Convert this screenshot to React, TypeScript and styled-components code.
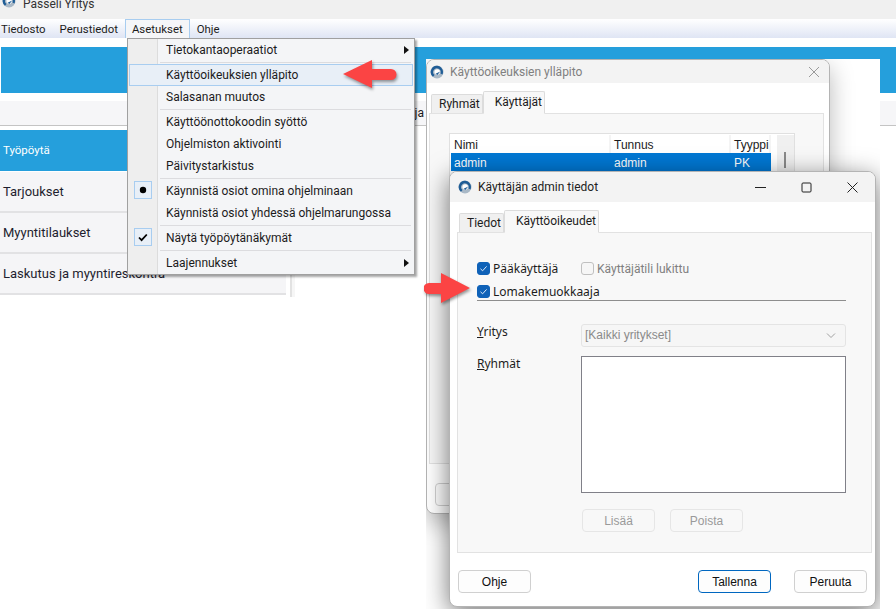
import React from 'react';
import styled, { createGlobalStyle } from 'styled-components';

const GlobalStyle = createGlobalStyle`
  html, body {
    margin: 0;
    padding: 0;
    background: #ffffff;
  }
  body {
    font-family: Roboto, "Noto Sans", sans-serif;
    font-size: 12px;
    color: #1a1a1a;
    overflow: hidden;
  }
`;

const Page = styled.div`
  position: relative;
  width: 896px;
  height: 609px;
  overflow: hidden;
  background: #ffffff;
`;

const TitleBar = styled.div`
  height: 19px;
  background: #f0f0f0;
  display: flex;
  align-items: flex-start;
  gap: 7px;
  padding-left: 2px;
  overflow: hidden;
  svg {
    margin-top: -6px;
  }
  span {
    font-size: 12px;
    line-height: 16px;
    color: #333;
    margin-top: -4px;
  }
`;

const MenuBar = styled.div`
  height: 19px;
  display: flex;
  background: linear-gradient(#ffffff, #dfe5f4);
`;

const MenuItem = styled.div<{ $open?: boolean }>`
  padding: 0 6px;
  font-size: 11.4px;
  line-height: 18px;
  color: #1c1c1c;
  border: 1px solid ${p => (p.$open ? '#a8cdf0' : 'transparent')};
  border-bottom: 0;
  background: ${p => (p.$open ? '#f5f6f8' : 'transparent')};
  &:first-child {
    padding-left: 0;
  }
`;

const Banner = styled.div`
  margin: 9px 0 0 1px;
  height: 46px;
  background: #259fdc;
`;

const ToolRow = styled.div`
  margin-top: 8px;
  height: 24px;
  background: #f6f6f8;
  border-bottom: 1px solid #c4c4c4;
  display: flex;
  justify-content: flex-end;
  padding-right: 472px;
  font-size: 12px;
  line-height: 25px;
`;

const Sidebar = styled.div`
  width: 286px;
  margin-top: 4px;
  padding: 0 4px 2px 0;
  border-right: 2px solid #e2e2e2;
  box-shadow: 3px 0 0 #f6f6f6;
  display: flex;
  flex-direction: column;
`;

const SideItem = styled.div<{ $active?: boolean }>`
  box-sizing: border-box;
  height: 41px;
  padding-left: 3px;
  margin-bottom: ${p => (p.$active ? '1px' : '0')};
  font-size: ${p => (p.$active ? '11.5px' : '13px')};
  line-height: ${p => (p.$active ? '41px' : '39px')};
  color: ${p => (p.$active ? '#ffffff' : '#1e1e2e')};
  background: ${p => (p.$active ? '#259fdc' : '#f5f5f7')};
  border-bottom: ${p => (p.$active ? '0' : '2px solid #e2e2e4')};
`;

const DropMenu = styled.div`
  position: absolute;
  left: 127px;
  top: 38px;
  width: 288px;
  box-sizing: border-box;
  background: #f4f5f7;
  border: 1px solid #a0a0a0;
  box-shadow: 2px 2px 2px rgba(0, 0, 0, 0.35);
  padding: 0 1px 0 30px;
  z-index: 5;
  &::before {
    content: '';
    position: absolute;
    left: 0;
    top: 0;
    bottom: 0;
    width: 30px;
    background: #eeeeee;
    border-right: 1px solid #dcdcdc;
    box-sizing: border-box;
  }
`;

const DropItem = styled.div<{ $hover?: boolean }>`
  position: relative;
  height: 22px;
  line-height: 22px;
  font-size: 12px;
  color: #1c1c1c;
  padding-left: 8px;
  ${p => p.$hover && `
    margin-left: -29px;
    padding-left: 37px;
    background: #e8eff7;
    box-shadow: inset 0 0 0 1px #a8cdf0;
  `}
`;

const DropSep = styled.div`
  height: 1px;
  margin: 1px 2px 1px 2px;
  background: #dcdcdf;
`;

const SubArrow = styled.i`
  position: absolute;
  right: 4px;
  top: 7px;
  border-left: 5px solid #111;
  border-top: 4px solid transparent;
  border-bottom: 4px solid transparent;
`;

const MarkBox = styled.div`
  position: absolute;
  left: -24px;
  top: 1px;
  width: 18px;
  height: 18px;
  box-sizing: border-box;
  border: 1px solid #a8cdf0;
  background: #e8eff7;
  display: flex;
  align-items: center;
  justify-content: center;
`;

// white grab of the dialogs pasted over the app, it clips their shadows
const DialogSheet = styled.div`
  position: absolute;
  left: 426px;
  top: 59px;
  width: 454px;
  height: 550px;
  overflow: hidden;
  background: #ffffff;
  z-index: 2;
`;

const Win = styled.div<{ $l: number; $t: number; $w: number; $h: number; $front?: boolean }>`
  position: absolute;
  left: ${p => p.$l}px;
  top: ${p => p.$t}px;
  width: ${p => p.$w}px;
  height: ${p => p.$h}px;
  background: #ffffff;
  border-radius: 8px;
  box-sizing: border-box;
  border: 1px solid #b4b4b4;
  box-shadow: ${p => (p.$front ? '0 6px 26px rgba(0, 0, 0, 0.55)' : '0 8px 24px rgba(0, 0, 0, 0.28)')};
  overflow: hidden;
`;

const WinTitle = styled.div<{ $dim?: boolean }>`
  height: ${p => (p.$dim ? '23px' : '30px')};
  background: #f3f3f3;
  display: flex;
  align-items: center;
  padding-left: ${p => (p.$dim ? '3px' : '8px')};
  gap: 6px;
  font-size: 12px;
  color: ${p => (p.$dim ? '#808080' : '#222')};
`;

const WinCtrls = styled.div`
  margin-left: auto;
  display: flex;
  align-items: center;
  svg {
    display: block;
  }
`;

const CtrlBtn = styled.div<{ $narrow?: boolean }>`
  width: ${p => (p.$narrow ? '30px' : '46px')};
  display: flex;
  justify-content: center;
`;

const TabRow = styled.div<{ $inset: number }>`
  display: flex;
  align-items: flex-end;
  height: 22px;
  margin-top: 8px;
  padding-left: ${p => p.$inset}px;
  position: relative;
  z-index: 1;
`;

const Tab = styled.div<{ $active?: boolean }>`
  font-size: 12px;
  height: ${p => (p.$active ? '23px' : '19px')};
  line-height: ${p => (p.$active ? '20px' : '18px')};
  padding-left: ${p => (p.$active ? '11px' : '7px')};
  padding-right: 2px;
  box-sizing: border-box;
  background: ${p => (p.$active ? '#f8f8f8' : '#f0f0f0')};
  border: 1px solid #dcdcdc;
  border-bottom: ${p => (p.$active ? '1px solid #f8f8f8' : '0')};
  margin-bottom: ${p => (p.$active ? '-1px' : '0')};
  border-radius: 2px 2px 0 0;
  color: #1c1c1c;
`;

const BackBody = styled.div`
  margin: 0 5px 0 2px;
  height: 351px;
  box-sizing: border-box;
  padding: 19px 28px 0 19px;
  background: #f8f8f8;
  border: 1px solid #e2e2e2;
`;

const UserList = styled.div`
  border: 1px solid #e0e0e0;
  background: #fff;
  height: 130px;
  padding: 1px 0 0 1px;
  display: grid;
  grid-template-columns: 1fr 22px;
`;

const UserGrid = styled.div`
  display: grid;
  grid-template-columns: 160px 120px 40px;
  grid-auto-rows: 18px;
  font-family: "Liberation Sans", Arial, sans-serif;
  font-size: 12px;
  line-height: 20px;
`;

const HeadCell = styled.div`
  padding-left: 3px;
  color: #1c1c1c;
  border-right: 2px solid #f4f4f4;
  white-space: nowrap;
  overflow: hidden;
`;

const RowCell = styled.div`
  background: #0078d4;
  color: #fff;
  padding-left: 3px;
`;

const ScrollTrack = styled.div`
  margin-left: 5px;
  padding: 17px 2px 0 0;
  background: #f0f0f0;
  display: flex;
  justify-content: center;
  i {
    width: 2px;
    height: 16px;
    background: #8a8a8a;
  }
`;

const BackFooter = styled.div`
  padding: 19px 0 0 8px;
`;

const Btn = styled.button<{ $primary?: boolean }>`
  width: 73px;
  height: 23px;
  padding: 0;
  font-family: "Liberation Sans", Arial, sans-serif;
  font-size: 12px;
  color: #111;
  background: #fdfdfd;
  border: 1px solid ${p => (p.$primary ? '#0067c0' : '#d0d0d0')};
  border-radius: 4px;
  &:disabled {
    color: #9a9a9a;
    background: #f8f8f8;
    border-color: #e6e6e6;
  }
`;

const Form = styled.div`
  margin: 0 3px 0 7px;
  height: 321px;
  box-sizing: border-box;
  padding: 26px 8px 0 19px;
  background: #f8f8f8;
  border: 1px solid #e2e2e2;
  display: flex;
  flex-direction: column;
`;

const CheckRow = styled.div<{ $second?: boolean }>`
  display: flex;
  align-items: center;
  height: ${p => (p.$second ? '17px' : '19px')};
  margin-top: ${p => (p.$second ? '5px' : '0')};
`;

const Check = styled.label<{ $off?: boolean; $wide?: boolean }>`
  display: flex;
  align-items: center;
  gap: 3px;
  font-family: ${p => (p.$off ? 'Roboto' : '"Noto Sans"')}, sans-serif;
  font-size: 12px;
  color: ${p => (p.$off ? '#808080' : '#1c1c1c')};
  width: ${p => (p.$off || p.$wide ? 'auto' : '104px')};
`;

const Box = styled.span<{ $on?: boolean }>`
  width: 13px;
  height: 13px;
  box-sizing: border-box;
  border-radius: 3px;
  background: ${p => (p.$on ? '#0f62b8' : '#f6f6f6')};
  border: 1px solid ${p => (p.$on ? '#0f62b8' : '#c0c0c0')};
  display: flex;
  align-items: center;
  justify-content: center;
`;

const Rule = styled.div`
  height: 1px;
  background: #8e8e8e;
  width: 369px;
`;

const FieldRow = styled.div<{ $gap: number }>`
  display: grid;
  grid-template-columns: 104px 265px;
  margin-top: ${p => p.$gap}px;
  font-family: "Noto Sans", sans-serif;
  font-size: 12px;
  line-height: 15px;
  color: #1c1c1c;
  u {
    text-decoration-thickness: 1px;
  }
`;

const Select = styled.div`
  height: 23px;
  box-sizing: border-box;
  border: 1px solid #e4e4e4;
  border-radius: 3px;
  background: #f6f6f6;
  font-family: "Liberation Sans", Arial, sans-serif;
  font-size: 12px;
  line-height: 21px;
  color: #8a8a8a;
  padding: 0 9px 0 3px;
  display: flex;
  justify-content: space-between;
  align-items: center;
`;

const ListBox = styled.div`
  height: 137px;
  box-sizing: border-box;
  background: #fff;
  border: 1px solid #808088;
`;

const FormButtons = styled.div`
  display: flex;
  gap: 15px;
  margin: 16px 0 0 105px;
`;

const Footer = styled.div`
  display: flex;
  padding: 17px 8px 0 8px;
  gap: 23px;
  ${Btn}:first-child {
    margin-right: auto;
  }
`;

const Arrow = styled.svg<{ $l: number; $t: number }>`
  position: absolute;
  left: ${p => p.$l}px;
  top: ${p => p.$t}px;
  z-index: 9;
  filter: drop-shadow(1px 2px 1.5px rgba(0, 0, 0, 0.4));
`;

function AppLogo({ size = 14 }: { size?: number }) {
  return (
    <svg width={size} height={size} viewBox="0 0 14 14" style={{ flex: 'none' }}>
      <circle cx="7" cy="7" r="6.5" fill="#a9b8c6" />
      <path d="M7 .8a6.200 6.200 0 0 0-4 11l1.500-1.700A3.800 3.800 0 1 1 10.500 8.500l2 .9A6.200 6.200 0 0 0 7 .8z" fill="#1f5d96" />
      <circle cx="7.200" cy="7" r="2.800" fill="#fff" />
      <path d="M10.200 6.400 7.400 10 5.600 8.800z" fill="#1f5d96" />
    </svg>
  );
}

function BoxTick() {
  return (
    <svg width="9" height="9" viewBox="0 0 9 9">
      <path d="M1.500 4.800 3.600 6.800 7.600 2.400" fill="none" stroke="#dfeafa" strokeWidth="1" />
    </svg>
  );
}

const menus = ['Tiedosto', 'Perustiedot', 'Asetukset', 'Ohje'];
const sideItems = ['Työpöytä', 'Tarjoukset', 'Myyntitilaukset', 'Laskutus ja myyntireskontra'];

export default function App() {
  return (
    <Page>
      <GlobalStyle />
      <TitleBar>
        <AppLogo size={14} />
        <span>Passeli Yritys</span>
      </TitleBar>
      <MenuBar>
        {menus.map(m => (
          <MenuItem key={m} $open={m === 'Asetukset'}>{m}</MenuItem>
        ))}
      </MenuBar>
      <Banner />
      <ToolRow>ja</ToolRow>
      <Sidebar>
        {sideItems.map((s, i) => (
          <SideItem key={s} $active={i === 0}>{s}</SideItem>
        ))}
      </Sidebar>

      <DropMenu>
        <DropItem>Tietokantaoperaatiot<SubArrow /></DropItem>
        <DropSep />
        <DropItem $hover>Käyttöoikeuksien ylläpito</DropItem>
        <DropItem>Salasanan muutos</DropItem>
        <DropSep />
        <DropItem>Käyttöönottokoodin syöttö</DropItem>
        <DropItem>Ohjelmiston aktivointi</DropItem>
        <DropItem>Päivitystarkistus</DropItem>
        <DropSep />
        <DropItem>
          <MarkBox>
            <svg width="8" height="8"><circle cx="4" cy="4" r="3.200" fill="#000" /></svg>
          </MarkBox>
          Käynnistä osiot omina ohjelminaan
        </DropItem>
        <DropItem>Käynnistä osiot yhdessä ohjelmarungossa</DropItem>
        <DropSep />
        <DropItem>
          <MarkBox>
            <svg width="10" height="9" viewBox="0 0 10 9"><path d="M1 4.500 3.600 7.200 8.800 1.500" fill="none" stroke="#000" strokeWidth="1.800" /></svg>
          </MarkBox>
          Näytä työpöytänäkymät
        </DropItem>
        <DropSep />
        <DropItem>Laajennukset<SubArrow /></DropItem>
      </DropMenu>

      <Arrow $l={342} $t={59} width="56" height="30" viewBox="0 0 56 30">
        <path d="M1 15 30 1V10H49a5.500 5.500 0 0 1 0 11H30v8z" fill="#fb4444" />
      </Arrow>

      <DialogSheet>
        <Win $l={0} $t={0} $w={404} $h={455}>
          <WinTitle $dim>
            <AppLogo />
            Käyttöoikeuksien ylläpito
            <WinCtrls>
              <CtrlBtn $narrow>
                <svg width="10" height="10"><path d="M0 0 10 10M10 0 0 10" stroke="#9a9a9a" fill="none" /></svg>
              </CtrlBtn>
            </WinCtrls>
          </WinTitle>
          <TabRow $inset={4}>
            <Tab>Ryhmät</Tab>
            <Tab $active>Käyttäjät</Tab>
          </TabRow>
          <BackBody>
            <UserList>
              <UserGrid>
                <HeadCell>Nimi</HeadCell>
                <HeadCell>Tunnus</HeadCell>
                <HeadCell>Tyyppi</HeadCell>
                <RowCell>admin</RowCell>
                <RowCell>admin</RowCell>
                <RowCell>PK</RowCell>
              </UserGrid>
              <ScrollTrack><i /></ScrollTrack>
            </UserList>
          </BackBody>
          <BackFooter><Btn>Ohje</Btn></BackFooter>
        </Win>

        <Win $l={23} $t={112} $w={427} $h={436} $front>
          <WinTitle>
            <AppLogo />
            Käyttäjän admin tiedot
            <WinCtrls>
              <CtrlBtn>
                <svg width="11" height="11"><path d="M0 5.500H11" stroke="#222" fill="none" /></svg>
              </CtrlBtn>
              <CtrlBtn>
                <svg width="11" height="11"><rect x="1" y="1" width="9" height="9" rx="1" stroke="#222" fill="none" /></svg>
              </CtrlBtn>
              <CtrlBtn>
                <svg width="11" height="11"><path d="M.5.500 10.500 10.500M10.500.500.500 10.500" stroke="#222" fill="none" /></svg>
              </CtrlBtn>
            </WinCtrls>
          </WinTitle>
          <TabRow $inset={9}>
            <Tab>Tiedot</Tab>
            <Tab $active>Käyttöoikeudet</Tab>
          </TabRow>
          <Form>
            <CheckRow>
              <Check><Box $on><BoxTick /></Box>Pääkäyttäjä</Check>
              <Check $off><Box />Käyttäjätili lukittu</Check>
            </CheckRow>
            <CheckRow $second>
              <Check $wide><Box $on><BoxTick /></Box>Lomakemuokkaaja</Check>
            </CheckRow>
            <Rule />
            <FieldRow $gap={23}>
              <span><u>Y</u>ritys</span>
              <Select>
                [Kaikki yritykset]
                <svg width="10" height="6"><path d="M1 .5 5 4.500 9 .5" stroke="#a0a0a0" fill="none" /></svg>
              </Select>
            </FieldRow>
            <FieldRow $gap={9}>
              <span><u>R</u>yhmät</span>
              <ListBox />
            </FieldRow>
            <FormButtons>
              <Btn disabled>Lisää</Btn>
              <Btn disabled>Poista</Btn>
            </FormButtons>
          </Form>
          <Footer>
            <Btn>Ohje</Btn>
            <Btn $primary>Tallenna</Btn>
            <Btn>Peruuta</Btn>
          </Footer>
        </Win>
      </DialogSheet>

      <Arrow $l={424} $t={273} width="47" height="31" viewBox="0 0 47 31">
        <path d="M46 15 17 0V10H5a5.500 5.500 0 0 0 0 11H17v9z" fill="#fb4444" />
      </Arrow>
    </Page>
  );
}
